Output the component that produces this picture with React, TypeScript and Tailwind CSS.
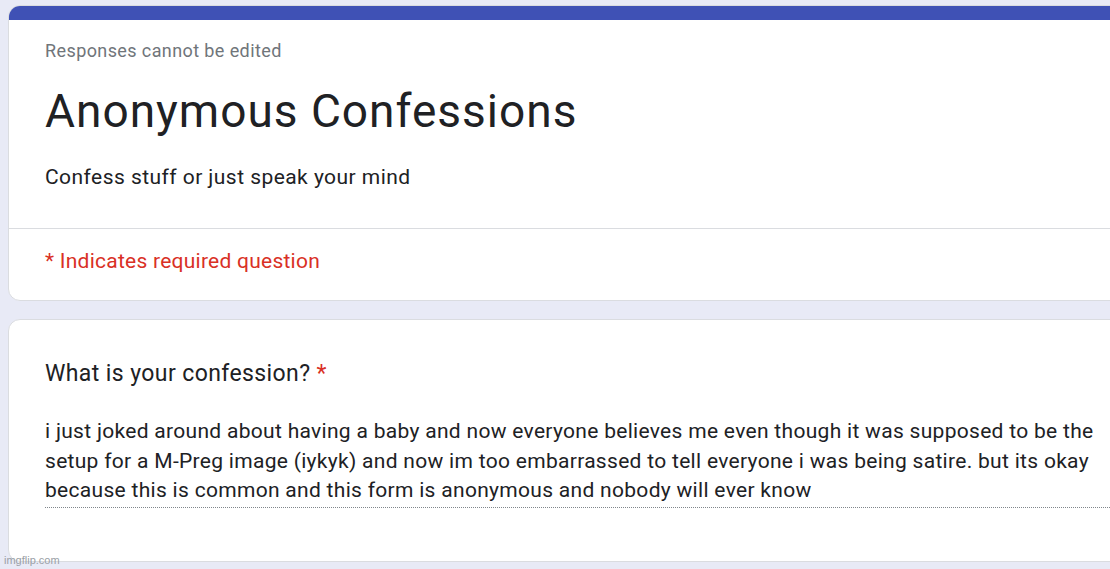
export default function App() {
  return (
    <div
      className="relative w-[1110px] h-[569px] overflow-hidden bg-[#e8eaf6] pl-[8px] pt-[5px]"
      style={{ fontFamily: "Roboto, 'Liberation Sans', sans-serif" }}
    >
      <div className="w-[1130px] rounded-[12px] border border-[#dadce0] bg-white overflow-hidden">
        <div className="h-[15px] bg-[#3f51b5] -mx-px -mt-px" />
        <div className="pl-[36px] pt-[19px] pb-[37px]">
          <div className="text-[18px] leading-[24px] tracking-[0.4px] text-[#70757a]">Responses cannot be edited</div>
          <div className="mt-[22px] text-[46px] leading-[52px] tracking-[1px] text-[#202124]">Anonymous Confessions</div>
          <div className="mt-[26px] text-[21px] leading-[28px] tracking-[0.45px] text-[#202124]">Confess stuff or just speak your mind</div>
        </div>
        <div className="h-px bg-[#dadce0]" />
        <div className="pl-[36px] pt-[18px] pb-[25px] text-[21px] leading-[28px] tracking-[0.25px] text-[#d93025]">
          * Indicates required question
        </div>
      </div>
      <div className="mt-[18px] w-[1130px] h-[243px] rounded-[12px] border border-[#dadce0] bg-white">
        <div className="pl-[36px] pt-[39px]">
          <div className="text-[23px] leading-[30px] tracking-[0.4px] text-[#202124]">
            What is your confession? <span className="text-[#d93025]">*</span>
          </div>
          <div className="mt-[28px] w-[1085px] border-b border-dotted border-[#80868b] pb-[1px] text-[21px] leading-[29.5px] tracking-[0.3px] text-[#202124]">
            i just joked around about having a baby and now everyone believes me even though it was supposed to be the setup for a M-Preg image (iykyk) and now im too embarrassed to tell everyone i was being satire. but its okay because this is common and this form is anonymous and nobody will ever know
          </div>
        </div>
      </div>
      <div className="absolute left-[4px] top-[553px] text-[11px] leading-[14px] text-[#9aa0a6]" style={{ fontFamily: "'Liberation Sans', Arial, sans-serif" }}>
        imgflip.com
      </div>
    </div>
  );
}
